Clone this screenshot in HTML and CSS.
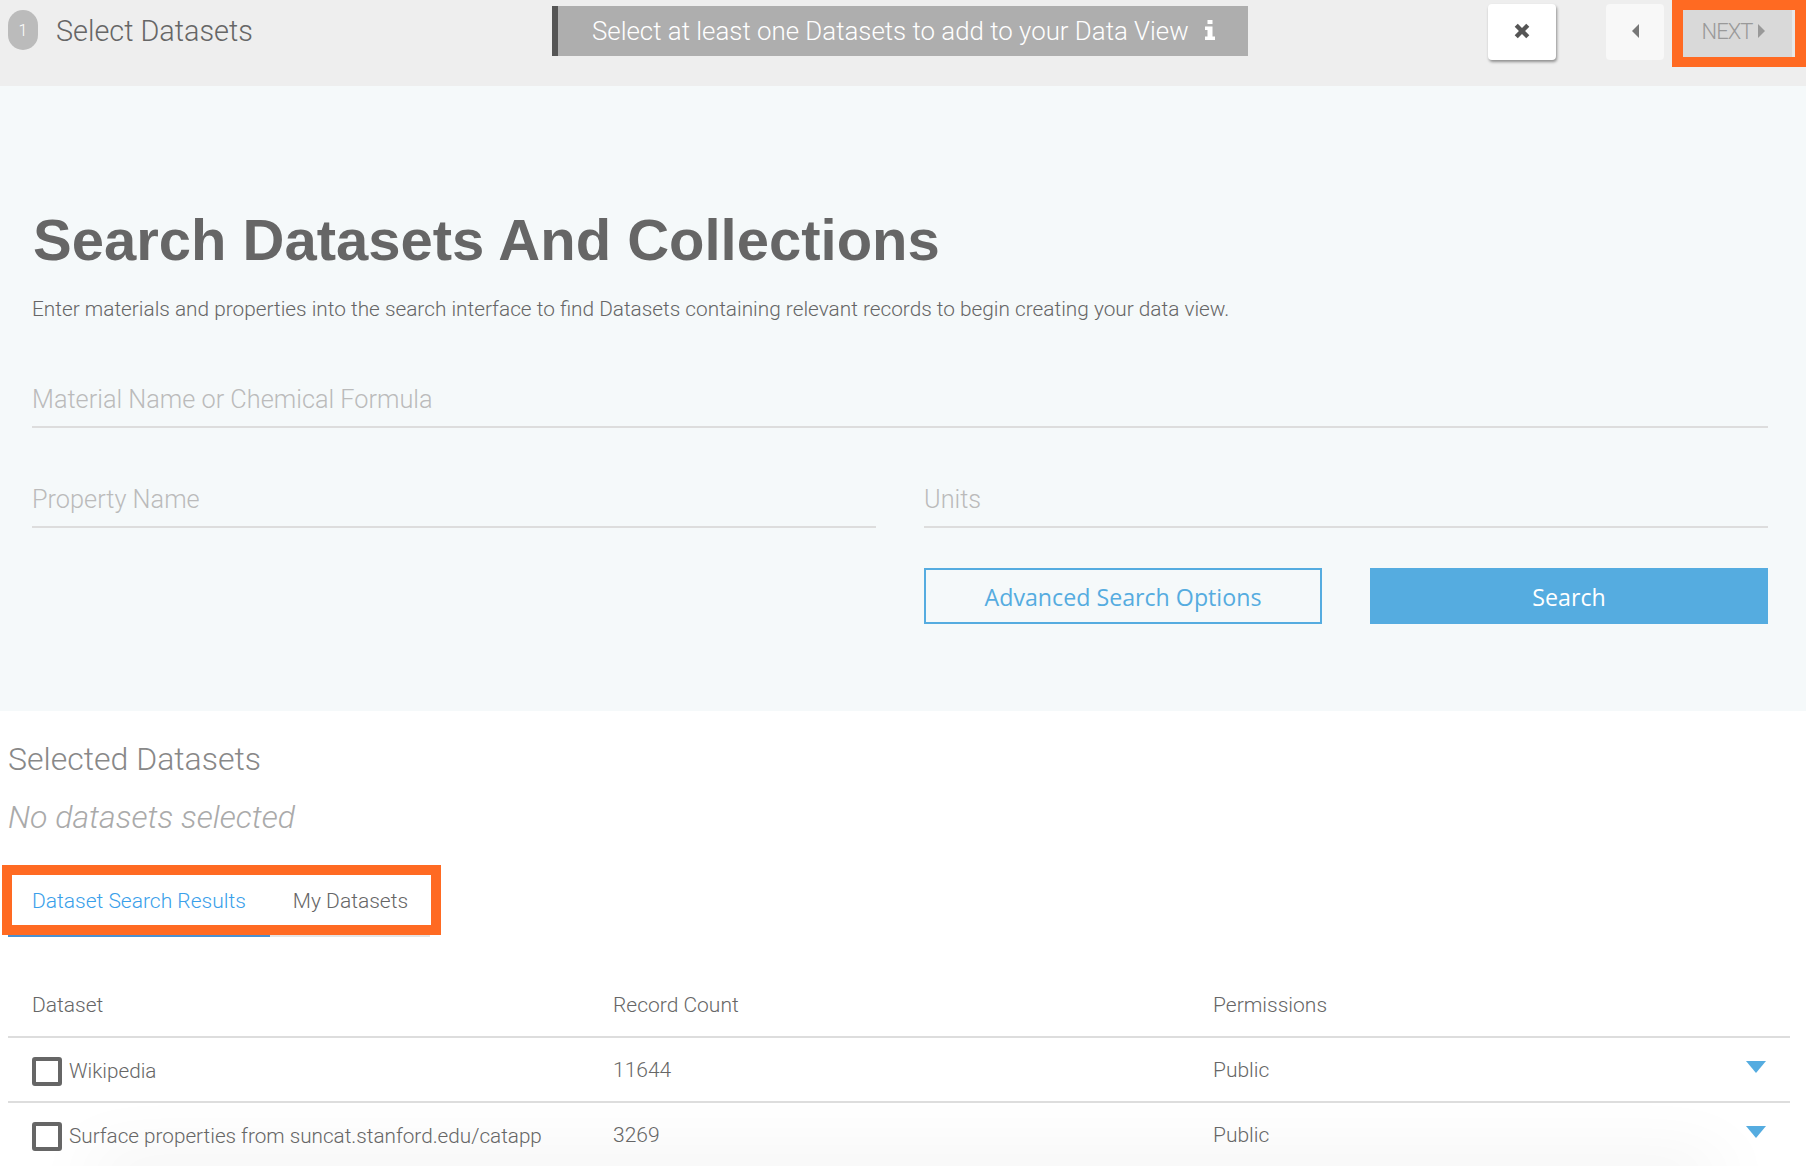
FILE: index.html
```html
<!DOCTYPE html>
<html lang="en">
<head>
<meta charset="utf-8">
<title>Select Datasets</title>
<link rel="stylesheet" href="styles.css">
</head>
<body>
<header class="topbar">
  <div class="step">
    <span class="step-badge">1</span>
    <span class="step-title">Select Datasets</span>
  </div>
  <div class="notice">
    <span>Select at least one Datasets to add to your Data View</span>
    <svg class="notice-icon" viewBox="0 0 10 20" width="10" height="20"><path d="M2.500 0h5v4h-5zM0 6.500h7.500v10H10V20H0v-3.500h2.500v-6.500H0z" fill="#fff"/></svg>
  </div>
  <div class="actions">
    <button class="btn-close" type="button" aria-label="Close"><svg viewBox="0 0 14 14" width="16" height="16"><path d="M3.300 0.600 7 4.300 10.700 0.600 13.400 3.300 9.700 7 13.400 10.700 10.700 13.400 7 9.700 3.300 13.400 0.600 10.700 4.300 7 0.600 3.300z" fill="#555"/></svg></button>
    <button class="btn-prev" type="button" aria-label="Previous"><svg viewBox="0 0 7 14" width="7" height="14"><path d="M7 0v14L0 7z" fill="#777"/></svg></button>
    <div class="next-wrap">
      <button class="btn-next" type="button">NEXT<svg viewBox="0 0 7 14" width="7" height="14"><path d="M0 0v14L7 7z" fill="#999"/></svg></button>
    </div>
  </div>
</header>

<section class="hero">
  <h1>Search Datasets And Collections</h1>
  <p class="lead">Enter materials and properties into the search interface to find Datasets containing relevant records to begin creating your data view.</p>
  <div class="field field-full">Material Name or Chemical Formula</div>
  <div class="field-row">
    <div class="field">Property Name</div>
    <div class="field">Units</div>
  </div>
  <div class="button-row">
    <a class="btn btn-outline">Advanced Search Options</a>
    <a class="btn btn-solid">Search</a>
  </div>
</section>

<main class="results">
  <h2>Selected Datasets</h2>
  <p class="empty">No datasets selected</p>
  <div class="tabs">
    <span class="tab tab-active">Dataset Search Results</span>
    <span class="tab tab-other">My Datasets</span>
    <span class="tabs-highlight"></span>
  </div>
  <div class="table">
    <div class="row row-head">
      <span>Dataset</span><span>Record Count</span><span>Permissions</span>
    </div>
    <div class="row">
      <label class="name"><span class="check"></span>Wikipedia</label>
      <span class="cell">11644</span><span class="cell">Public</span>
      <svg class="caret" viewBox="0 0 20 12" width="20" height="12"><path d="M0 0h20L10 12z" fill="#55ace0"/></svg>
    </div>
    <div class="row">
      <label class="name"><span class="check"></span>Surface properties from suncat.stanford.edu/catapp</label>
      <span class="cell">3269</span><span class="cell">Public</span>
      <svg class="caret" viewBox="0 0 20 12" width="20" height="12"><path d="M0 0h20L10 12z" fill="#55ace0"/></svg>
    </div>
  </div>
  <div class="fade"></div>
</main>
</body>
</html>
```
FILE: styles.css
```css
* { box-sizing: border-box; }
html, body { margin: 0; padding: 0; }
body {
  width: 1806px;
  height: 1166px;
  overflow: hidden;
  background: #fff;
  color: #666;
  font-family: Roboto, "Liberation Sans", sans-serif;
  font-weight: 300;
  position: relative;
}
button { font: inherit; border: 0; padding: 0; cursor: pointer; }

.topbar {
  height: 86px;
  background: #eee;
  display: flex;
  align-items: flex-start;
  padding-left: 8px;
}
.step { width: 544px; display: flex; align-items: center; height: 40px; margin-top: 10px; }
.step-badge {
  width: 30px; height: 40px; border-radius: 15px;
  background: #bbb; color: #fff;
  font-size: 16px;
  display: flex; align-items: center; justify-content: center;
}
.step-title { margin: 2px 0 0 18px; font-size: 28.8px; color: #666; white-space: nowrap; }
.notice {
  width: 696px; height: 50px; margin-top: 6px;
  background: #aeaeae;
  border-left: 6px solid #555;
  color: #fff;
  font-size: 25.85px;
  padding-left: 34px;
  display: flex; align-items: center;
  white-space: nowrap;
}
.notice-icon { margin-left: 16px; margin-top: -3px; }
.actions { display: flex; align-items: flex-start; margin-left: 240px; }
.btn-close {
  width: 68px; height: 56px; margin-top: 4px; padding-bottom: 2px;
  background: #fff; border-radius: 4px;
  box-shadow: 1px 2px 3px rgba(0,0,0,.4);
  display: flex; align-items: center; justify-content: center;
}
.btn-prev {
  width: 58px; height: 56px; margin: 4px 0 0 50px; padding-bottom: 2px;
  background: #f8f8f8; border-radius: 4px;
  display: flex; align-items: center; justify-content: center;
}
.next-wrap { width: 134px; height: 67px; margin-left: 8px; border: 11px solid #ff6a22; border-top-width: 10px; border-bottom-width: 10px; background: #d9d9d9; }
.btn-next {
  width: 100%; height: 100%;
  padding: 0 8px 5px 0;
  background: #d9d9d9;
  border-right: 3px solid #e8e8e8;
  color: #999;
  font-size: 22px;
  letter-spacing: -1px;
  display: flex; align-items: center; justify-content: center; gap: 6px;
}

.hero {
  height: 625px;
  background: #f5f9fa;
  padding: 120px 38px 0 32px;
}
h1 {
  margin: 0 0 0 1px;
  font-family: "Liberation Sans", sans-serif;
  font-weight: 700;
  font-size: 58px;
  line-height: 68px;
  color: #666;
}
.lead { margin: 23px 0 0; font-size: 20.8px; line-height: 24px; color: #666; white-space: nowrap; }
.field {
  height: 48px;
  border-bottom: 2px solid #ddd;
  font-size: 25.3px;
  line-height: 40px;
  color: #bbb;
}
.field-full { margin-top: 59px; }
.field-row { display: grid; grid-template-columns: 844px 844px; column-gap: 48px; margin-top: 52px; }
.button-row { display: flex; justify-content: flex-end; gap: 48px; margin-top: 40px; }
.btn {
  width: 398px; height: 56px;
  padding-top: 2px;
  font-family: "Open Sans", sans-serif;
  font-weight: 400;
  font-size: 23.2px;
  display: flex; align-items: center; justify-content: center;
}
.btn-outline { border: 2px solid #55ace0; color: #55ace0; }
.btn-solid { background: #55ace0; color: #fff; }

.results { height: 455px; padding: 24px 16px 0 8px; position: relative; }
h2 { margin: 0; font-weight: 300; font-size: 32px; line-height: 48px; color: #888; }
.empty { margin: 10px 0 0; font-size: 32px; line-height: 48px; font-style: italic; color: #aaa; }
.tabs {
  position: relative;
  z-index: 2;
  display: flex;
  width: 422px;
  height: 67px;
  margin-top: 29px;
  border-bottom: 2px solid #e4e4e4;
  font-size: 21px;
}
.tab { padding: 0 24px; height: 67px; line-height: 62px; white-space: nowrap; }
.tab-active { width: 262px; color: #3aa0ea; border-bottom: 2px solid #4a90d0; }
.tab-other { padding-left: 23px; }
.tabs-highlight {
  position: absolute; left: -6px; top: -5px; width: 439px; height: 70px;
  border: 10px solid #ff6a22;
}
.table { position: relative; z-index: 1; margin-top: 36px; }
.row {
  position: relative;
  display: grid;
  grid-template-columns: 581px 600px 1fr;
  height: 65px;
  padding-left: 24px;
  align-items: center;
  font-size: 21px;
  border-bottom: 2px solid #ddd;
}
.cell { margin-top: 0; }
.name { display: flex; align-items: center; white-space: nowrap; font-size: 20.7px; margin-top: 3px; }
.check {
  width: 30px; height: 29px; border: 4px solid #666; border-radius: 3px;
  margin-right: 7px; flex: none;
}
.caret { position: absolute; right: 24px; top: 23px; }
.fade {
  position: absolute; left: 90px; top: 455px; width: 1630px; height: 20px;
  box-shadow: 0 0 70px rgba(0,0,0,.12);
  pointer-events: none;
}
```
